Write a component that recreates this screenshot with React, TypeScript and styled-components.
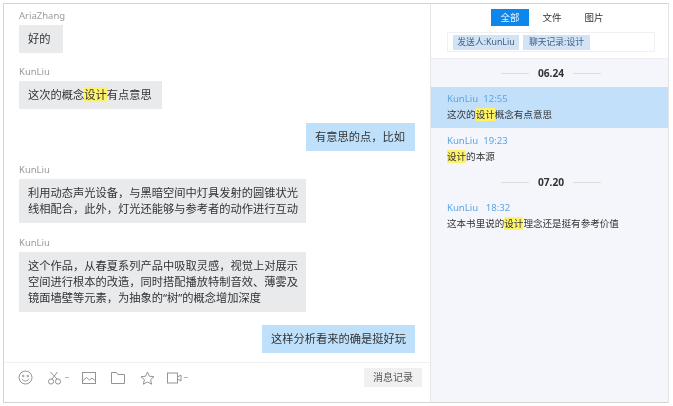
import React from "react";
import styled, { createGlobalStyle } from "styled-components";

const Global = createGlobalStyle`
  html, body { margin: 0; padding: 0; background: #ffffff; }
  body { width: 673px; height: 406px; overflow: hidden; font-family: "Noto Sans", "Noto Sans CJK SC", sans-serif; }
  * { box-sizing: border-box; }
`;

const Page = styled.div`
  width: 673px;
  height: 406px;
  padding: 3px 4px 3px 3px;
  filter: blur(0.35px);
`;
const Frame = styled.div`
  width: 100%;
  height: 100%;
  display: flex;
  border: 1px solid #d4d4d4;
  border-right-color: #e4e4e4;
  overflow: hidden;
`;
const ChatPane = styled.div`
  width: 426px;
  flex: none;
  display: flex;
  flex-direction: column;
  background: #ffffff;
`;
const Messages = styled.div`
  flex: 1;
  min-height: 0;
  padding: 5px 15px 0 15px;
  display: flex;
  flex-direction: column;
`;
const Sender = styled.div<{ $top: number }>`
  margin-top: ${(p) => p.$top}px;
  font-size: 9.5px;
  line-height: 14px;
  color: #9a9a9a;
`;
const Bubble = styled.div<{ $mine?: boolean; $top: number; $w: number }>`
  align-self: ${(p) => (p.$mine ? "flex-end" : "flex-start")};
  width: ${(p) => p.$w}px;
  margin-top: ${(p) => p.$top}px;
  padding: 6px 0 6px 9px;
  background: ${(p) => (p.$mine ? "#bfe0fa" : "#e9eaec")};
  font-size: 11.25px;
  line-height: 16px;
  color: #333333;
  white-space: pre;
`;
const Mark = styled.span`
  background: #fdf26a;
`;
const Toolbar = styled.div`
  height: 40px;
  flex: none;
  border-top: 1px solid #f1f1f1;
  display: flex;
  align-items: center;
  padding: 0 8px 10px 14px;
  color: #949494;
`;
const Tool = styled.span<{ $gap: number }>`
  display: inline-flex;
  align-items: center;
  margin-right: ${(p) => p.$gap}px;
`;
const Caret = styled.span`
  width: 4px;
  height: 1.5px;
  margin-left: 2px;
  background: #b5b5b5;
`;
const HistoryButton = styled.div`
  margin-left: auto;
  width: 58px;
  height: 19px;
  background: #f0f0f0;
  font-size: 10px;
  line-height: 19px;
  text-align: center;
  color: #555555;
`;
const SidePane = styled.div`
  flex: 1;
  display: flex;
  flex-direction: column;
  background: #f5f6fc;
  border-left: 1px solid #e6e6e6;
`;
const SearchHead = styled.div`
  height: 55px;
  flex: none;
  background: #ffffff;
  padding: 5px 13px 0 16px;
  border-bottom: 1px solid #eeeeee;
`;
const Tabs = styled.div`
  display: flex;
  justify-content: center;
  gap: 4px;
  padding-left: 2px;
`;
const Tab = styled.div<{ $active?: boolean }>`
  width: 38px;
  height: 17px;
  font-size: 9.5px;
  line-height: 17px;
  text-align: center;
  background: ${(p) => (p.$active ? "#0f87ea" : "transparent")};
  color: ${(p) => (p.$active ? "#e4f1fd" : "#333333")};
`;
const FilterBox = styled.div`
  margin-top: 6px;
  height: 20px;
  border: 1px solid #eef0f4;
  display: flex;
  align-items: center;
  gap: 4px;
  padding-left: 5px;
`;
const Chip = styled.span<{ $w: number }>`
  width: ${(p) => p.$w}px;
  height: 15px;
  background: #d2e3f6;
  font-size: 8.8px;
  line-height: 15px;
  text-align: center;
  color: #3f5f80;
  white-space: nowrap;
`;
const DateLine = styled.div<{ $top: number }>`
  margin-top: ${(p) => p.$top}px;
  display: flex;
  justify-content: center;
  align-items: center;
  gap: 9px;
  height: 16px;
  padding-left: 3px;
  font-size: 10.2px;
  font-weight: 700;
  color: #333333;
`;
const Rule = styled.span`
  width: 28px;
  height: 1px;
  background: #dddddd;
`;
const Result = styled.div<{ $active?: boolean; $top: number; $h: number }>`
  margin-top: ${(p) => p.$top}px;
  height: ${(p) => p.$h}px;
  padding: 4px 14px 0 16px;
  background: ${(p) => (p.$active ? "#c3e0fb" : "transparent")};
`;
const ResultMeta = styled.div`
  font-size: 9.6px;
  line-height: 16px;
  color: #5aa5e6;
  white-space: pre;
`;
const ResultText = styled.div`
  font-size: 9.55px;
  line-height: 16px;
  color: #333333;
`;

const Icon = styled.svg`
  display: block;
  fill: none;
  stroke: currentColor;
  stroke-width: 1;
`;

const Smile = () => (
  <Icon width="15" height="15" viewBox="0 0 15 15">
    <circle cx="7.5" cy="7.5" r="6.5" />
    <circle cx="5.2" cy="6" r="0.8" />
    <circle cx="9.8" cy="6" r="0.8" />
    <path d="M4 8.8c1 2.8 6 2.8 7 0" />
  </Icon>
);
const Scissors = () => (
  <Icon width="16" height="14" viewBox="0 0 16 14">
    <circle cx="4" cy="10.5" r="2.6" />
    <circle cx="11" cy="10.5" r="2.6" />
    <path d="M5 8 10.5 1M10 8 3.5 1" />
  </Icon>
);
const Picture = () => (
  <Icon width="14" height="12" viewBox="0 0 14 12">
    <rect x="0.5" y="0.5" width="13" height="11" />
    <path d="M1 8.5 4.5 5.5 7.5 8 10 6l3 2.5" />
  </Icon>
);
const Folder = () => (
  <Icon width="14" height="12" viewBox="0 0 14 12">
    <path d="M0.5 11.5V0.5H5.5L6.8 2.5H13.5V11.5Z" />
  </Icon>
);
const Star = () => (
  <Icon width="15" height="14" viewBox="0 0 15 14">
    <path d="M7.5 1 9.4 5.2 14 5.7 10.6 8.7 11.6 13.2 7.5 10.9 3.4 13.2 4.4 8.7 1 5.7 5.6 5.2Z" />
  </Icon>
);
const Video = () => (
  <Icon width="15" height="12" viewBox="0 0 15 12">
    <rect x="0.5" y="1" width="10" height="10" />
    <path d="M10.5 5 14 3v6l-3.5-2" />
  </Icon>
);

export default function App() {
  return (
    <>
      <Global />
      <Page>
        <Frame>
          <ChatPane>
            <Messages>
              <Sender $top={0}>AriaZhang</Sender>
              <Bubble $top={2} $w={44}>好的</Bubble>
              <Sender $top={12}>KunLiu</Sender>
              <Bubble $top={2} $w={143}>这次的概念<Mark>设计</Mark>有点意思</Bubble>
              <Bubble $mine $top={14} $w={109}>有意思的点，比如</Bubble>
              <Sender $top={12}>KunLiu</Sender>
              <Bubble $top={2} $w={287}>{"利用动态声光设备，与黑暗空间中灯具发射的圆锥状光\n线相配合，此外，灯光还能够与参考者的动作进行互动"}</Bubble>
              <Sender $top={13}>KunLiu</Sender>
              <Bubble $top={2} $w={287}>{"这个作品，从春夏系列产品中吸取灵感，视觉上对展示\n空间进行根本的改造，同时搭配播放特制音效、薄雾及\n镜面墙壁等元素，为抽象的“树”的概念增加深度"}</Bubble>
              <Bubble $mine $top={13} $w={153}>这样分析看来的确是挺好玩</Bubble>
            </Messages>
            <Toolbar>
              <Tool $gap={14}><Smile /></Tool>
              <Tool $gap={13}><Scissors /><Caret /></Tool>
              <Tool $gap={15}><Picture /></Tool>
              <Tool $gap={15}><Folder /></Tool>
              <Tool $gap={12}><Star /></Tool>
              <Tool $gap={0}><Video /><Caret /></Tool>
              <HistoryButton>消息记录</HistoryButton>
            </Toolbar>
          </ChatPane>
          <SidePane>
            <SearchHead>
              <Tabs>
                <Tab $active>全部</Tab>
                <Tab>文件</Tab>
                <Tab>图片</Tab>
              </Tabs>
              <FilterBox>
                <Chip $w={66}>发送人:KunLiu</Chip>
                <Chip $w={67}>聊天记录:设计</Chip>
              </FilterBox>
            </SearchHead>
            <DateLine $top={6}><Rule />06.24<Rule /></DateLine>
            <Result $active $top={6} $h={41}>
              <ResultMeta>KunLiu  12:55</ResultMeta>
              <ResultText>这次的<Mark>设计</Mark>概念有点意思</ResultText>
            </Result>
            <Result $top={1} $h={45}>
              <ResultMeta>KunLiu  19:23</ResultMeta>
              <ResultText><Mark>设计</Mark>的本源</ResultText>
            </Result>
            <DateLine $top={0}><Rule />07.20<Rule /></DateLine>
            <Result $top={6} $h={44}>
              <ResultMeta>KunLiu   18:32</ResultMeta>
              <ResultText>这本书里说的<Mark>设计</Mark>理念还是挺有参考价值</ResultText>
            </Result>
          </SidePane>
        </Frame>
      </Page>
    </>
  );
}
